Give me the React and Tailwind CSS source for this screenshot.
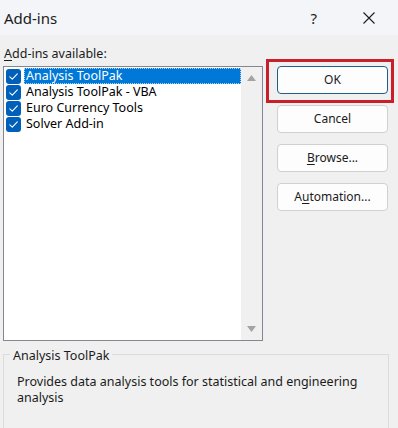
import React from "react";

const font = { fontFamily: '"Noto Sans", "Open Sans", Arial, sans-serif' };

function Check() {
  return (
    <span className="flex h-[15px] w-[15px] shrink-0 items-center justify-center rounded-[3px] bg-[#005fb8]">
      <svg width="11" height="11" viewBox="0 0 11 11" fill="none">
        <path d="M1.8 5.8 L4.3 8.2 L9.3 2.8" stroke="white" strokeWidth="1.1" strokeLinecap="round" strokeLinejoin="round" />
      </svg>
    </span>
  );
}

function Row({ label, selected }) {
  return (
    <div className="flex h-[16px] items-center">
      <div className="ml-[2px] flex w-[18px] items-center">
        <Check />
      </div>
      <div
        className={
          selected
            ? "flex h-[16px] flex-1 items-center border border-dotted border-[#b9d3ef] bg-[#0078d7] pl-[1px] text-white"
            : "flex h-[16px] flex-1 items-center pl-[2px] text-black"
        }
      >
        <span className="text-[12.5px] leading-[16px]">{label}</span>
      </div>
    </div>
  );
}

function Btn({ children }) {
  return (
    <button className="flex h-[28px] w-[111px] items-center justify-center rounded-[4px] border border-[#d0d0d0] bg-[#fdfdfd] text-[12px] text-[#1b1b1b]">
      {children}
    </button>
  );
}

export default function App() {
  return (
    <div className="h-[428px] w-[398px] overflow-hidden bg-[#f0f0f0] text-[#1b1b1b]" style={font}>
      {/* title bar */}
      <div className="flex h-[35px] items-center bg-[#f3f5f8] pl-[4px]">
        <span className="text-[15px] leading-[20px]">Add-ins</span>
        <span className="ml-auto mr-[46px] text-[15px] leading-[20px]">?</span>
        <svg className="mr-[23px]" width="12" height="12" viewBox="0 0 12 12">
          <path d="M0.5 0.5 L11.5 11.5 M11.5 0.5 L0.5 11.5" stroke="#1b1b1b" strokeWidth="1.1" />
        </svg>
      </div>

      <div className="flex">
        {/* left column */}
        <div className="ml-[3px] flex w-[260px] flex-col">
          <div className="h-[31px] pl-[1px] pt-[11px] text-[12.5px] leading-[16px]">
            <span className="underline underline-offset-2">A</span>dd-ins available:
          </div>
          <div className="flex h-[275px] border border-[#828790] bg-white">
            <div className="flex flex-1 flex-col pt-[1px]">
              <Row label="Analysis ToolPak" selected />
              <Row label="Analysis ToolPak - VBA" />
              <Row label="Euro Currency Tools" />
              <Row label="Solver Add-in" />
            </div>
            <div className="flex w-[21px] flex-col items-center justify-between bg-[#f0f0f0] py-[8px]">
              <svg width="9" height="6" viewBox="0 0 9 6">
                <path d="M4.5 0 L9 6 L0 6 Z" fill="#a3a3a3" />
              </svg>
              <svg width="9" height="6" viewBox="0 0 9 6">
                <path d="M0 0 L9 0 L4.5 6 Z" fill="#a3a3a3" />
              </svg>
            </div>
          </div>
        </div>

        {/* buttons */}
        <div className="ml-[14px] mt-[31px] flex flex-col gap-[11px]">
          <div className="relative">
            <button className="flex h-[28px] w-[111px] items-center justify-center rounded-[4px] border border-[#1f5f8a] bg-[#fdfdfd] text-[12px] text-[#1b1b1b]">
              OK
            </button>
            <span className="pointer-events-none absolute -left-[11px] -right-[6px] -top-[7px] -bottom-[9px] border-[3px] border-[#c8202a]" />
          </div>
          <Btn>Cancel</Btn>
          <Btn>
            <span>
              <span className="underline underline-offset-2">B</span>rowse...
            </span>
          </Btn>
          <Btn>
            <span>
              A<span className="underline underline-offset-2">u</span>tomation...
            </span>
          </Btn>
        </div>
      </div>

      {/* group box */}
      <div className="relative ml-[3px] mt-[13px] h-[120px] w-[386px] border border-[#dcdcdc] pl-[13px] pt-[19px]">
        <span className="absolute -top-[7px] left-[6px] bg-[#f0f0f0] px-[3px] text-[12.5px] leading-[16px]">
          Analysis ToolPak
        </span>
        <p className="text-[12.5px] leading-[16px]">
          Provides data analysis tools for statistical and engineering analysis
        </p>
      </div>
    </div>
  );
}
